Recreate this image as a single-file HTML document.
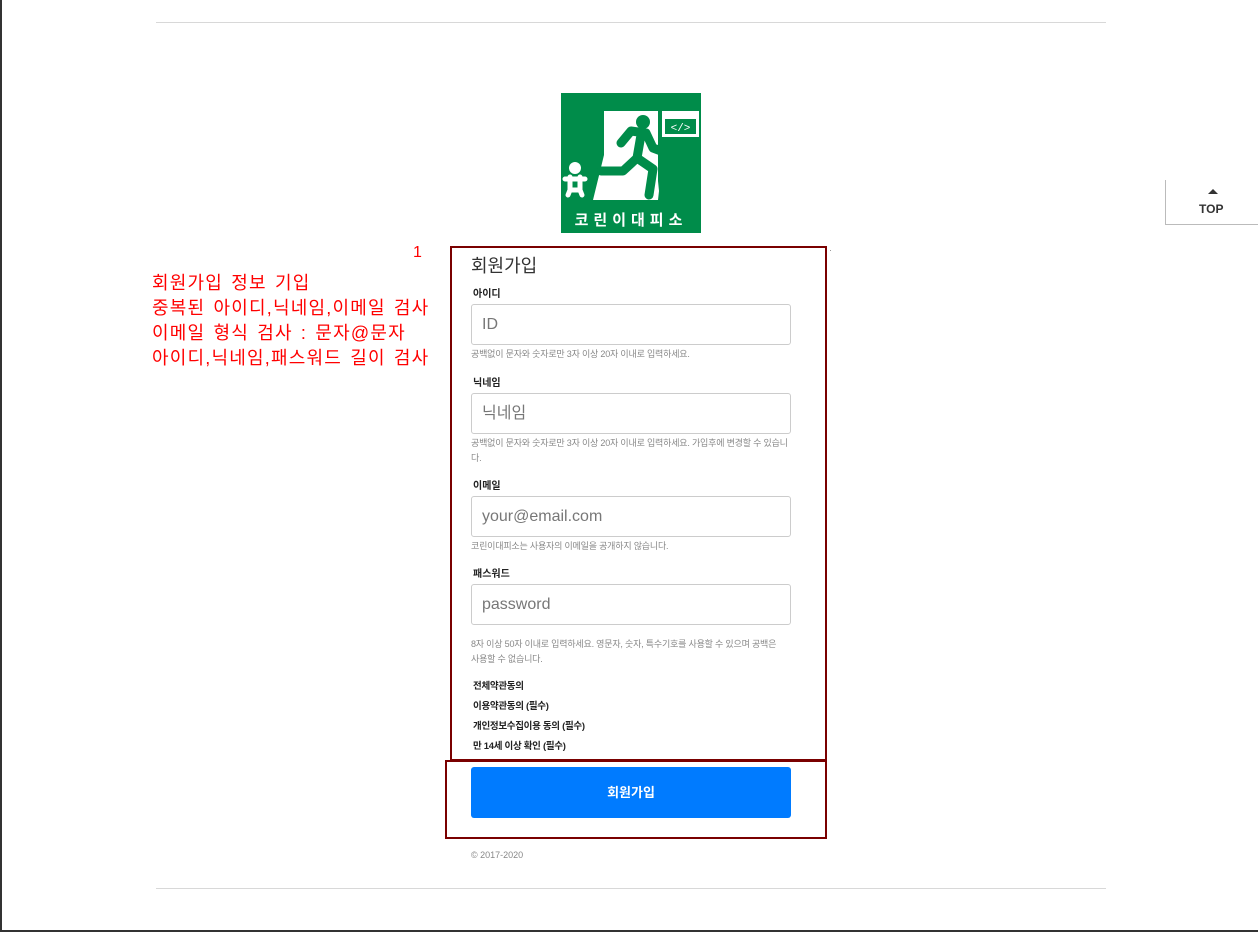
<!DOCTYPE html>
<html><head><meta charset="utf-8"><style>
*{margin:0;padding:0;box-sizing:border-box}
body{width:1258px;height:932px;background:#fff;position:relative;overflow:hidden;font-family:"Liberation Sans","Noto Sans CJK KR",sans-serif;color:#222}
.a{position:absolute}
.hl{height:1px;background:#d8d8d8;left:156px;width:950px}
.lbl{font-size:10px;font-weight:bold;color:#222;left:473px}
.inp{left:471px;width:320px;height:41px;border:1px solid #ccc;border-radius:3px;font-size:16px;color:#777;padding:10px 10px;line-height:20px}
.help{left:471px;width:320px;font-size:9px;color:#888;line-height:15px;letter-spacing:-0.2px}
.red{color:#f00;font-size:18px;line-height:25px;left:152px;letter-spacing:1.2px;word-spacing:2px}
.chk{left:473px;font-size:9.5px;font-weight:bold;color:#222;letter-spacing:-0.3px}
</style></head><body>
<div class="a" style="left:0;top:0;width:2px;height:932px;background:#333"></div>
<div class="a" style="left:0;top:930px;width:1258px;height:2px;background:#333"></div>
<div class="a hl" style="top:22px"></div>
<div class="a hl" style="top:888px"></div>

<svg class="a" style="left:561px;top:93px" width="140" height="140" viewBox="0 0 140 140">
<rect width="140" height="140" fill="#008c4a"/>
<polygon points="43,18 97,18 97,88 98,98 97,107 32,107 43,62" fill="#fff"/>
<rect x="101" y="18" width="37" height="26" fill="#fff"/>
<rect x="104" y="26" width="31" height="15" fill="#008c4a"/>
<text x="119.5" y="38" font-size="11" fill="#fff" text-anchor="middle" font-family="Liberation Mono">&lt;/&gt;</text>
<circle cx="82" cy="29" r="7" fill="#008c4a"/>
<path d="M60,50 L70,38 L85,40 L92,55 L100,58 M80,42 L76,65 L62,78 L40,78 M76,65 L92,76 L88,102" stroke="#008c4a" stroke-width="9" fill="none" stroke-linecap="round" stroke-linejoin="round"/>
<circle cx="14" cy="75" r="6" fill="#fff"/>
<path d="M4,86 L24,86 M9,84 L9,97 L19,97 L19,84 M9,97 L7,102 M19,97 L21,102" stroke="#fff" stroke-width="5" fill="none" stroke-linecap="round"/>
<text x="70" y="132" font-size="15" font-weight="bold" fill="#fff" text-anchor="middle" letter-spacing="5" font-family="Noto Sans CJK KR,sans-serif">코린이대피소</text>
</svg>

<div class="a" style="left:1165px;top:180px;width:93px;height:45px;border-left:1px solid #bbb;border-bottom:1px solid #bbb"></div>
<div class="a" style="left:1208px;top:189px;width:0;height:0;border-left:5px solid transparent;border-right:5px solid transparent;border-bottom:5px solid #333"></div>
<div class="a" style="left:1199px;top:202px;font-size:12px;font-weight:bold;color:#333">TOP</div>

<div class="a" style="left:413px;top:244px;color:#f00;font-size:16px">1</div>
<div class="a red" style="top:271px">회원가입 정보 기입<br>중복된 아이디,닉네임,이메일 검사<br>이메일 형식 검사 : 문자@문자<br>아이디,닉네임,패스워드 길이 검사</div>
<div class="a" style="left:830px;top:250px;width:1px;height:1px;background:#999"></div>

<div class="a" style="left:450px;top:246px;width:377px;height:515px;border:2px solid #7a0000"></div>
<div class="a" style="left:445px;top:760px;width:382px;height:79px;border:2px solid #7a0000"></div>

<div class="a" style="left:471px;top:252px;font-size:18px;color:#333">회원가입</div>
<div class="a lbl" style="top:285px">아이디</div>
<div class="a inp" style="top:304px">ID</div>
<div class="a help" style="top:347px">공백없이 문자와 숫자로만 3자 이상 20자 이내로 입력하세요.</div>
<div class="a lbl" style="top:374px">닉네임</div>
<div class="a inp" style="top:393px">닉네임</div>
<div class="a help" style="top:436px">공백없이 문자와 숫자로만 3자 이상 20자 이내로 입력하세요. 가입후에 변경할 수 있습니다.</div>
<div class="a lbl" style="top:477px">이메일</div>
<div class="a inp" style="top:496px">your@email.com</div>
<div class="a help" style="top:539px">코린이대피소는 사용자의 이메일을 공개하지 않습니다.</div>
<div class="a lbl" style="top:565px">패스워드</div>
<div class="a inp" style="top:584px">password</div>
<div class="a help" style="top:637px">8자 이상 50자 이내로 입력하세요. 영문자, 숫자, 특수기호를 사용할 수 있으며 공백은<br>사용할 수 없습니다.</div>
<div class="a chk" style="top:678px">전체약관동의</div>
<div class="a chk" style="top:698px">이용약관동의 (필수)</div>
<div class="a chk" style="top:718px">개인정보수집이용 동의 (필수)</div>
<div class="a chk" style="top:738px">만 14세 이상 확인 (필수)</div>

<div class="a" style="left:471px;top:767px;width:320px;height:51px;background:#007bff;border-radius:3px;color:#fff;font-size:13px;font-weight:bold;text-align:center;line-height:51px">회원가입</div>
<div class="a" style="left:471px;top:850px;font-size:9px;color:#888">© 2017-2020</div>
</body></html>
